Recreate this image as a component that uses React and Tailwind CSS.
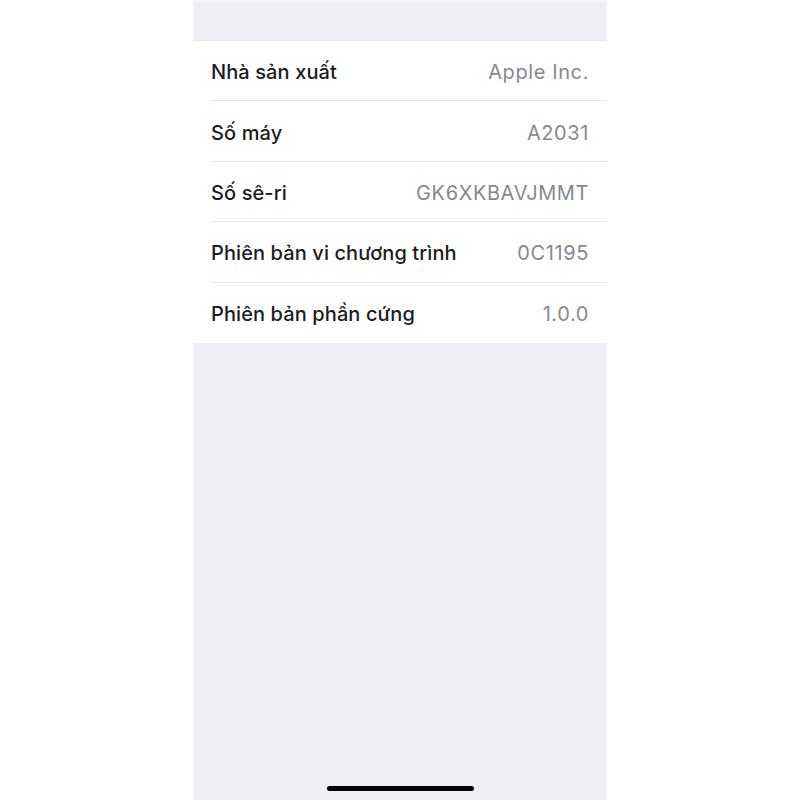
import React from "react";

const rows = [
  { label: "Nhà sản xuất", value: "Apple Inc." },
  { label: "Số máy", value: "A2031" },
  { label: "Số sê-ri", value: "GK6XKBAVJMMT" },
  { label: "Phiên bản vi chương trình", value: "0C1195" },
  { label: "Phiên bản phần cứng", value: "1.0.0" },
];

const InfoRow = ({ label, value, last }) => (
  <div className="pl-[18px]">
    <div
      className={`flex h-[60.4px] items-center justify-between pr-[18px] pt-[3px] ${
        last ? "" : "border-b border-[#e4e4e8]"
      }`}
    >
      <span className="text-[20px] font-medium tracking-[0.1px] text-[#1c1c1e]">
        {label}
      </span>
      <span className="text-[20px] tracking-[0.6px] text-[#88888c]">{value}</span>
    </div>
  </div>
);

export default function App() {
  return (
    <div className="flex h-[800px] w-full justify-center bg-white font-['Inter',sans-serif]">
      <div className="flex w-[414px] flex-col bg-[#f0eff5]">
        <div className="h-[41px] border-t-2 border-[#f7f7fa] border-b border-b-[#e8e8ec]" />
        <div className="bg-white">
          {rows.map((r, i) => (
            <InfoRow key={r.label} {...r} last={i === rows.length - 1} />
          ))}
        </div>
        <div className="flex-1" />
        <div className="flex justify-center pb-[9px]">
          <div className="h-[5px] w-[147px] rounded-full bg-black" />
        </div>
      </div>
    </div>
  );
}
